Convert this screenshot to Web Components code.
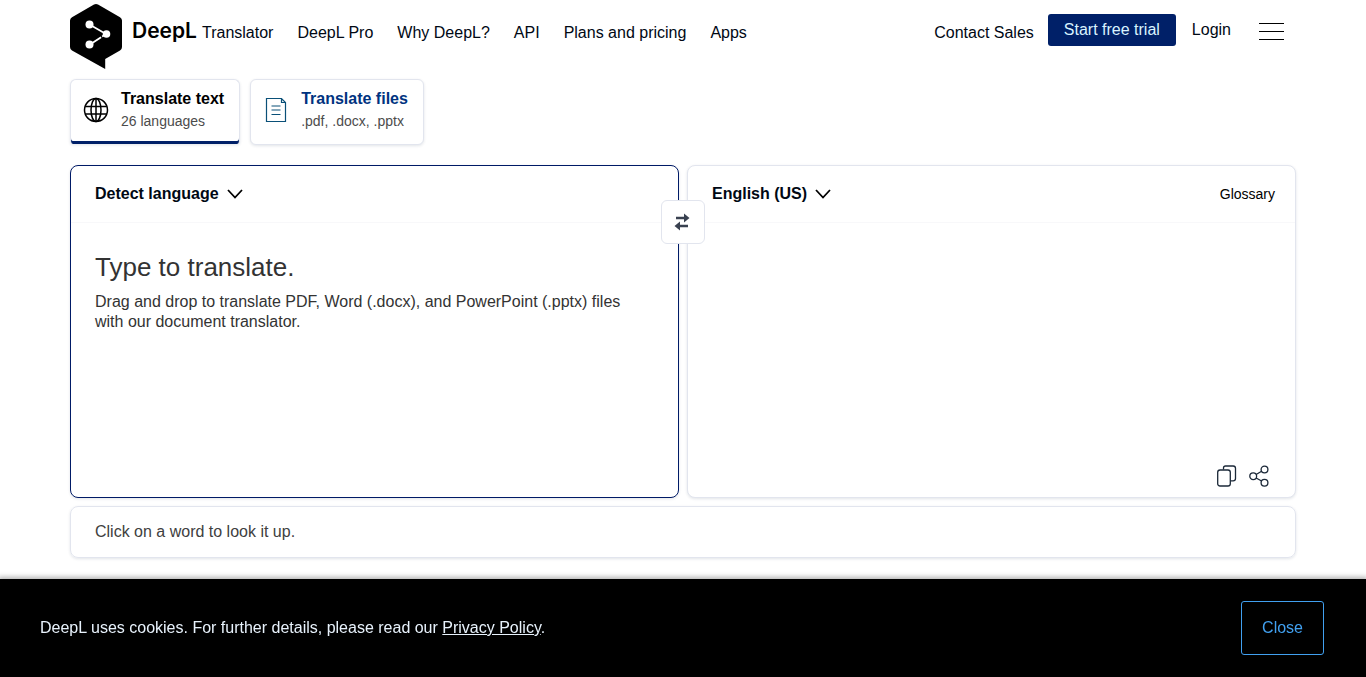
<!DOCTYPE html>
<html lang="en">
<head>
<meta charset="utf-8">
<meta name="viewport" content="width=device-width, initial-scale=1">
<title>DeepL Translator</title>
<style>
  body {
    margin: 0;
    background: #fff;
    color: #000;
    font: 16px/20px "Liberation Sans", Arial, sans-serif;
  }
</style>
</head>
<body>
<translator-page></translator-page>

<script>
const base = `
  *, *::before, *::after { box-sizing: border-box; }
  [hidden] { display: none !important; }
  a { color: inherit; text-decoration: none; }
  button, select, textarea {
    margin: 0;
    padding: 0;
    border: 0;
    background: none;
    color: inherit;
    font: inherit;
  }
  button, select { cursor: pointer; }
  svg { display: block; flex: none; }
`

function define(name, html) {
  customElements.define(name, class extends HTMLElement {
    constructor() {
      super();
      const template = document.createElement('template');
      template.innerHTML = html;
      this.attachShadow({mode: "open"});
      this.shadowRoot.appendChild(template.content.cloneNode(true));
    }
  });
}

// Header
define('deepl-logo', `
  <style>${base}
  :host { display: block; flex: none; }
  a { display: flex; gap: 10px; }
  span {
    font: 600 21px/54px Inter, "Open Sans", sans-serif;
    font-optical-sizing: none;
    color: #000;
  }
  </style>
  <a href="#" aria-label="DeepL">
    <svg width="52" height="65" viewBox="0 0 52 65">
      <path d="M24 .6q2-1.1 4 0L50 13.200q2 1.200 2 3.400V43q0 2.400-2 3.500L35.200 55v10L2 46.500Q0 45.400 0 43V16.600q0-2.200 2-3.400z" fill="#000"/>
      <path d="M19.500 20.500L36 30 20 40.500" fill="none" stroke="#fff" stroke-width="1.800"/>
      <circle cx="19.500" cy="20.500" r="4" fill="#fff"/>
      <circle cx="36.500" cy="30" r="3.800" fill="#fff"/>
      <circle cx="19.500" cy="40.500" r="4" fill="#fff"/>
      <path d="M30.300 30.800l3 4.500" stroke="#000" stroke-width="1.200"/>
    </svg>
    <span>DeepL</span>
  </a>
`);

define('site-header', `
  <style>${base}
  :host {
    display: flex;
    gap: 5px;
    padding: 4px 12px 0 0;
    color: #000814;
  }
  nav {
    flex: 1;
    display: flex;
    gap: 24px;
    line-height: 58px;
    white-space: nowrap;
  }
  .sales { margin-left: auto; }
  .actions {
    display: flex;
    align-items: center;
    gap: 16px;
    height: 52px;
    padding-left: 9px;
    white-space: nowrap;
  }
  .trial {
    padding: 6px 16px;
    border-radius: 3px;
    background: #002068;
    color: #d9f3ff;
  }
  .menu { padding-left: 12px; margin-top: 2px; }
  </style>
  <deepl-logo></deepl-logo>
  <nav>
    <a href="#">Translator</a>
    <a href="#">DeepL Pro</a>
    <a href="#">Why DeepL?</a>
    <a href="#">API</a>
    <a href="#">Plans and pricing</a>
    <a href="#">Apps</a>
    <a class="sales" href="#">Contact Sales</a>
  </nav>
  <div class="actions">
    <a class="trial" href="#">Start free trial</a>
    <a href="#">Login</a>
    <button class="menu" type="button" aria-label="Menu">
      <svg width="25" height="18" viewBox="0 0 25 18">
        <path d="M0 1.500h25M0 9.500h25M0 17.500h25" stroke="#000"/>
      </svg>
    </button>
  </div>
`);

// Text / files switch
define('mode-tab', `
  <style>${base}
  :host { display: block; color: #003380; }
  :host([selected]) { color: #000; }
  button {
    display: flex;
    align-items: center;
    gap: 12px;
    padding: 8px 15px 12px 12px;
    border: 1px solid #e2e5ee;
    border-radius: 6px;
    background: #fff;
    box-shadow: 0 1px 3px rgba(15, 43, 70, .12);
    line-height: 22px;
    text-align: left;
    white-space: nowrap;
  }
  :host([selected]) button {
    padding-bottom: 12px;
    border-bottom: 0;
    border-radius: 6px 6px 3px 3px;
    box-shadow: inset 0 -3px #002068, 0 1px 3px rgba(15, 43, 70, .12);
  }
  b, small { display: block; }
  small { font-size: 14px; color: #4c4c4c; }
  </style>
  <button type="button">
    <slot name="icon"></slot>
    <span><b><slot></slot></b><small><slot name="note"></slot></small></span>
  </button>
`);

// Language drop-down
define('language-select', `
  <style>${base}
  :host { display: flex; align-items: center; }
  label { display: flex; align-items: center; gap: 8px; }
  select {
    appearance: none;
    field-sizing: content;
    font-weight: bold;
    color: #000814;
  }
  svg { pointer-events: none; }
  </style>
  <label>
    <select></select>
    <svg width="16" height="10" viewBox="0 0 16 10">
      <path d="M1 1l7 7.500L15 1" fill="none" stroke="#000" stroke-width="1.800"/>
    </svg>
  </label>
`);

define('text-panel', `
  <style>${base}
  :host {
    display: flex;
    flex-direction: column;
    min-width: 0;
    border: 1px solid #e2e5ee;
    border-radius: 8px;
    background: #fff;
    box-shadow: 0 1px 3px rgba(15, 43, 70, .12);
  }
  :host([active]) { border-color: #001a66; }
  header {
    display: flex;
    justify-content: space-between;
    align-items: center;
    min-height: 57px;
    padding: 0 20px 0 24px;
    border-bottom: 1px solid #f8f8fa;
  }
  .body {
    flex: 1;
    display: grid;
    min-height: 274px;
  }
  ::slotted(*) { grid-area: 1 / 1; }
  </style>
  <header><slot name="language"></slot><slot name="tools"></slot></header>
  <div class="body"><slot></slot></div>
`);

define('translator-panels', `
  <style>${base}
  :host { position: relative; display: grid; grid-template-columns: 1fr 1fr; gap: 8px; }
  .swap {
    position: absolute;
    top: 35px;
    left: 50%;
    display: grid;
    place-items: center;
    width: 44px;
    height: 44px;
    transform: translateX(-50%);
    border: 1px solid #e2e5ee;
    border-radius: 6px;
    background: #fff;
  }
  textarea {
    width: 100%;
    padding: 27px 32px 24px 24px;
    outline: 0;
    resize: none;
    font-size: 24px;
    line-height: 34px;
  }
  .hint {
    padding: 27px 32px 24px 24px;
    color: #333;
    pointer-events: none;
  }
  .hint strong {
    display: block;
    margin-bottom: 8px;
    font-weight: normal;
    font-size: 26px;
    line-height: 34px;
  }
  .glossary { font-size: 14px; }
  .result {
    display: flex;
    flex-direction: column;
    justify-content: flex-end;
    align-items: flex-end;
    padding: 0 26px 9px 24px;
  }
  .result div { display: flex; gap: 12px; }
  </style>
  <text-panel active>
    <language-select slot="language" label="Source language" options="Detect language,English,French,German,Spanish"></language-select>
    <textarea id="source"></textarea>
    <label class="hint" for="source">
      <strong>Type to translate.</strong>
      Drag and drop to translate PDF, Word (.docx), and PowerPoint (.pptx) files with our document translator.
    </label>
  </text-panel>
  <text-panel>
    <language-select slot="language" label="Target language" options="English (US),English (UK),French,German,Spanish"></language-select>
    <button slot="tools" class="glossary" type="button">Glossary</button>
    <section class="result">
      <div>
        <button type="button" aria-label="Copy">
          <svg width="21" height="24" viewBox="0 0 21 24" fill="none" stroke="#1b2838" stroke-width="1.300">
            <rect x="1.700" y="6" width="12.600" height="16" rx="2.300"/>
            <path d="M7.500 5.500V4Q7.500 2 9.500 2h7.700q2.300 0 2.300 2.300v10.200q0 2.300-2.300 2.300h-2.500"/>
          </svg>
        </button>
        <button type="button" aria-label="Share">
          <svg width="20" height="24" viewBox="0 0 20 24" fill="none" stroke="#1b2838" stroke-width="1.300">
            <circle cx="4.200" cy="12.200" r="3.400"/>
            <circle cx="15.500" cy="5.500" r="3.400"/>
            <circle cx="15.500" cy="18.800" r="3.400"/>
            <path d="M7.100 10.500l5.500-3.300M7.100 14l5.500 3"/>
          </svg>
        </button>
      </div>
    </section>
  </text-panel>
  <button class="swap" type="button" aria-label="Swap languages">
    <svg width="18" height="18" viewBox="0 0 18 18" fill="#394150">
      <path d="M2 3.800h8V.5l5.500 4.500L10 9.500V6.200H2zM14 11.800H6V8.500L.5 13 6 17.500v-3.300h8z"/>
    </svg>
  </button>
`);

define('cookie-banner', `
  <style>${base}
  :host {
    position: fixed;
    right: 0;
    bottom: 0;
    left: 0;
    display: flex;
    justify-content: space-between;
    align-items: center;
    padding: 22px 42px 22px 40px;
    background: #000;
    color: #e8f2fc;
    box-shadow: 0 0 5px 2px rgba(0, 0, 0, .3);
  }
  a { text-decoration: underline; }
  p { margin: 0; }
  button {
    padding: 16px 20px;
    border: 1px solid #41a0f0;
    border-radius: 3px;
    color: #41a0f0;
  }
  </style>
  <p>DeepL uses cookies. For further details, please read our <a href="#">Privacy Policy</a>.</p>
  <button type="button">Close</button>
`);

define('translator-page', `
  <style>${base}
  :host { display: block; padding: 0 70px 119px; }
  .tabs { display: flex; gap: 10px; margin: 10px 0 20px; }
  .lookup {
    margin-top: 8px;
    padding: 15px 24px;
    border: 1px solid #e2e5ee;
    border-radius: 8px;
    box-shadow: 0 1px 3px rgba(15, 43, 70, .12);
    color: #404040;
  }
  </style>
  <site-header></site-header>
  <main>
    <div class="tabs">
      <mode-tab selected>
        <svg slot="icon" width="26" height="26" viewBox="0 0 26 26" fill="none" stroke="#000" stroke-width="1.500">
          <circle cx="13" cy="13" r="11.500"/>
          <ellipse cx="13" cy="13" rx="5" ry="11.500"/>
          <path d="M13 1.500v23M2.300 9.500h21.400M2.300 17h21.400" />
        </svg>
        Translate text
        <span slot="note">26 languages</span>
      </mode-tab>
      <mode-tab>
        <svg slot="icon" width="26" height="26" viewBox="0 0 26 26" fill="none" stroke="#0a5078" stroke-width="1.200">
          <path d="M3.500 1.500h15l4 4v19h-19zM18.500 1.500v4h4M8.500 9h9M8.500 13h9M8.500 17.500h9"/>
        </svg>
        Translate files
        <span slot="note">.pdf, .docx, .pptx</span>
      </mode-tab>
    </div>
    <translator-panels></translator-panels>
    <div class="lookup">Click on a word to look it up.</div>
  </main>
  <cookie-banner></cookie-banner>
`);

// Fill the drop-downs from their attributes
function fillLanguages(root) {
  root.querySelectorAll('language-select').forEach(el => {
    const select = el.shadowRoot.querySelector('select');
    select.setAttribute('aria-label', el.getAttribute('label'));
    el.getAttribute('options').split(',').forEach(name => select.add(new Option(name)));
  });
}

const page = document.querySelector('translator-page');
const panels = page.shadowRoot.querySelector('translator-panels');
fillLanguages(panels.shadowRoot);

const source = panels.shadowRoot.querySelector('#source');
source.addEventListener('input', () => {
  panels.shadowRoot.querySelector('.hint').hidden = source.value !== '';
});

const banner = page.shadowRoot.querySelector('cookie-banner');
banner.shadowRoot.querySelector('button').addEventListener('click', () => banner.remove());
</script>
</body>
</html>
